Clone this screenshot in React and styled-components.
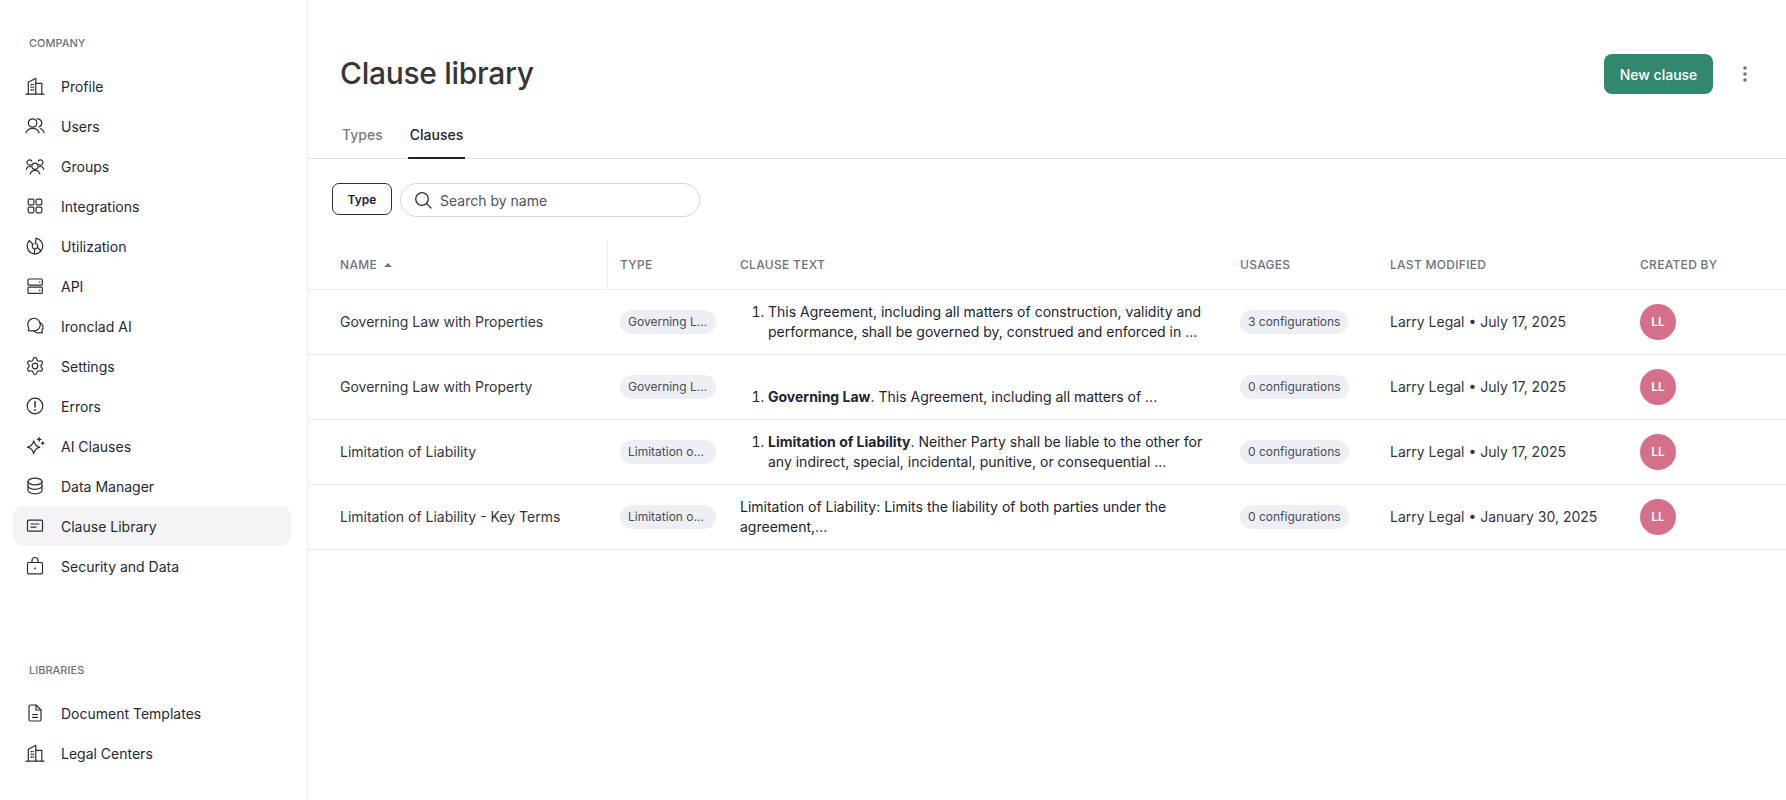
import React from 'react';
import styled, { createGlobalStyle } from 'styled-components';

const Global = createGlobalStyle`
  html, body { margin: 0; padding: 0; background: #fff; }
  body { font-family: Inter, "Liberation Sans", sans-serif; color: #22242f; -webkit-font-smoothing: antialiased; }
  * { box-sizing: border-box; }
`;

const Page = styled.div`
  display: flex;
  height: 800px;
  width: 100%;
  overflow: hidden;
`;

const Sidebar = styled.nav`
  flex: 0 0 308px;
  width: 308px;
  height: 800px;
  padding: 35px 16px 0 13px;
  border-right: 1px solid #ededf0;
`;

const SectionLabel = styled.div`
  font-size: 11px;
  line-height: 16px;
  font-weight: 500;
  color: #6f717c;
  text-transform: uppercase;
  padding-left: 16px;
  margin-bottom: 15px;
`;

const NavGroup = styled.div`
  & + & {
    margin-top: 76px;
  }
`;

const NavRow = styled.div`
  display: flex;
  align-items: center;
  gap: 16px;
  height: 40px;
  padding-left: 12px;
  border-radius: 10px;
  font-size: 14px;
  color: #262833;
  background: ${p => (p.$active ? '#f4f4f7' : 'transparent')};
`;

const IconSvg = styled.svg`
  flex: none;
  width: 20px;
  height: 20px;
  fill: none;
  stroke: #2b2d38;
  stroke-width: 1.2;
  stroke-linecap: round;
  stroke-linejoin: round;
`;

const Dot = styled.circle`
  fill: #2b2d38;
  stroke: none;
`;

const icons = {
  building: (
    <>
      <path d="M1 18.2h18" />
      <path d="M3.3 18.2V6.3L10.8 2.2v16" />
      <path d="M10.8 7.3h6v10.9" />
      <path d="M6 8.6h.9M8.2 8.6h.4M6 11.2h.9M8.2 11.2h.4M6 14h.9M8.2 14h.4" strokeWidth="1.3" />
    </>
  ),
  users: (
    <>
      <circle cx="7.6" cy="7" r="4.2" />
      <path d="M1 16.8c1.1-2.9 3.6-4.4 6.6-4.4s5.500 1.500 6.600 4.400" />
      <path d="M12 3c2.700-.3 4.800 1.500 4.800 4 0 1.800-1.100 3.300-2.700 3.900" />
      <path d="M15.600 12.600c1.800.6 2.900 1.900 3.600 4.200" />
    </>
  ),
  groups: (
    <>
      <circle cx="10" cy="10.2" r="3.1" />
      <path d="M5.2 18c.7-2.2 2.500-3.600 4.800-3.600s4.100 1.400 4.800 3.600" />
      <path d="M6.200 8.600C5.700 9 5.100 9.100 4.600 9.100a2.600 2.600 0 1 1 2.200-4" />
      <path d="M1.200 13.400c.5-1.800 1.800-2.900 3.500-2.900.5 0 1 .1 1.400.3" />
      <path d="M13.200 5.100a2.600 2.600 0 1 1 2.200 4c-.5 0-1.100-.1-1.600-.5" />
      <path d="M13.900 10.800c.4-.2.900-.3 1.400-.3 1.700 0 3 1.100 3.500 2.900" />
    </>
  ),
  grid: (
    <>
      <rect x="3.200" y="3.200" width="5.700" height="5.700" rx="1.200" />
      <rect x="11.100" y="3.200" width="5.700" height="5.700" rx="1.200" />
      <rect x="3.200" y="11.100" width="5.700" height="5.700" rx="1.200" />
      <rect x="11.100" y="11.100" width="5.700" height="5.700" rx="1.200" />
    </>
  ),
  pie: (
    <>
      <path d="M11 2.300A7.800 7.800 0 1 1 4.300 4.700" />
      <path d="M4.300 4.700 8 8.200" />
      <path d="M11 2.300 10.400 7.400" />
      <path d="M10.400 7.400a2.800 2.800 0 1 1-2.400 .8" />
      <path d="M9.800 13 9.300 17.700" />
      <path d="M12.600 11.500 16 15" />
    </>
  ),
  server: (
    <>
      <rect x="3" y="3" width="14.300" height="6.200" rx="1" />
      <rect x="3" y="11.200" width="14.300" height="6.200" rx="1" />
      <path d="M14.600 6.100h.2M14.600 14.300h.2" strokeWidth="1.400" />
    </>
  ),
  chat: (
    <>
      <path d="M3.200 14.600l.8-2.200A6.300 6.300 0 1 1 9 14.900c-1.900.1-3.900 0-5.800-.3z" />
      <path d="M14.800 6.600a5.200 5.200 0 0 1 2 8.200l.5 2-2.200-.3a5.200 5.200 0 0 1-6.100-1.600" />
    </>
  ),
  gear: (
    <>
      <circle cx="10" cy="10" r="2.800" />
      <path
        transform="scale(.8333)"
        strokeWidth="1.440"
        d="M9.671 4.136a2.34 2.34 0 0 1 4.659 0 2.34 2.34 0 0 0 3.319 1.915 2.34 2.34 0 0 1 2.33 4.033 2.34 2.34 0 0 0 0 3.831 2.34 2.34 0 0 1-2.33 4.033 2.34 2.34 0 0 0-3.319 1.915 2.34 2.34 0 0 1-4.659 0 2.34 2.34 0 0 0-3.32-1.915 2.34 2.34 0 0 1-2.33-4.033 2.34 2.34 0 0 0 0-3.831A2.34 2.34 0 0 1 6.35 6.051a2.34 2.34 0 0 0 3.319-1.915"
      />
    </>
  ),
  alert: (
    <>
      <circle cx="10" cy="10" r="7.800" />
      <path d="M10 5.800v5.200" strokeWidth="1.500" />
      <Dot cx="10" cy="14" r=".9" />
    </>
  ),
  sparkle: (
    <>
      <path d="M8.700 4.800c.8 3.700 2.600 5.500 6.100 6.400-3.500.9-5.300 2.700-6.100 6.500-.8-3.800-2.600-5.600-6.300-6.500 3.700-.9 5.500-2.700 6.300-6.400z" />
      <path d="M14.200 1.600v3.600M12.500 3.400h3.500M17.700 6v2.300M16.600 7.200h2.300" strokeWidth="1.300" />
    </>
  ),
  database: (
    <>
      <ellipse cx="10" cy="5.500" rx="7" ry="3.300" />
      <path d="M3 5.500v9c0 1.800 3.100 3.300 7 3.300s7-1.500 7-3.300v-9" />
      <path d="M3 10c0 1.800 3.100 3.300 7 3.300s7-1.500 7-3.300" />
    </>
  ),
  card: (
    <>
      <rect x="2.500" y="4.200" width="15" height="11" rx="1" />
      <path d="M6 8h8M6 11.200h5" />
    </>
  ),
  lock: (
    <>
      <rect x="2.500" y="6.500" width="15" height="11.300" rx="1" />
      <path d="M7 6.500V4.500a3 3 0 0 1 6 0v2" />
      <Dot cx="10" cy="12.400" r=".9" />
    </>
  ),
  doc: (
    <>
      <path d="M4 3.500A1.500 1.500 0 0 1 5.500 2H11l5 5v9.500a1.500 1.500 0 0 1-1.500 1.500h-9A1.500 1.500 0 0 1 4 16.500z" />
      <path d="M11 2v5h5" />
      <path d="M7.500 11.500h5M7.500 14.300h5" />
    </>
  ),
};

const NavIcon = ({ name }) => (
  <IconSvg viewBox="0 0 20 20">{icons[name]}</IconSvg>
);

const companyNav = [
  ['building', 'Profile'],
  ['users', 'Users'],
  ['groups', 'Groups'],
  ['grid', 'Integrations'],
  ['pie', 'Utilization'],
  ['server', 'API'],
  ['chat', 'Ironclad AI'],
  ['gear', 'Settings'],
  ['alert', 'Errors'],
  ['sparkle', 'AI Clauses'],
  ['database', 'Data Manager'],
  ['card', 'Clause Library'],
  ['lock', 'Security and Data'],
];

const libraryNav = [
  ['doc', 'Document Templates'],
  ['building', 'Legal Centers'],
];

const Main = styled.main`
  flex: 1;
  min-width: 0;
`;

const Head = styled.header`
  display: flex;
  align-items: center;
  justify-content: space-between;
  padding: 54px 32px 0;
`;

const Title = styled.h1`
  margin: 0 0 2px;
  font-size: 30px;
  line-height: 38px;
  font-weight: 500;
  color: #363636;
  letter-spacing: -0.3px;
`;

const Actions = styled.div`
  display: flex;
  align-items: center;
  gap: 28px;
  margin-right: 5px;
`;

const PrimaryButton = styled.button`
  width: 109px;
  height: 40px;
  border: 0;
  border-radius: 8px;
  background: #32876f;
  color: #fff;
  font: 500 14px Inter, sans-serif;
`;

const KebabIcon = styled.svg`
  width: 8px;
  height: 16px;
  fill: #6f717c;
`;

const Tabs = styled.div`
  display: flex;
  gap: 23px;
  height: 45px;
  margin-top: 20px;
  padding-left: 32px;
  border-bottom: 1px solid #e2e2e8;
`;

const Tab = styled.div`
  display: flex;
  align-items: center;
  height: 45px;
  padding: 0 2px 2px;
  font-size: 14px;
  font-weight: 500;
  color: ${p => (p.$active ? '#22242f' : '#777a86')};
  border-bottom: 2px solid ${p => (p.$active ? '#22242f' : 'transparent')};
`;

const Filters = styled.div`
  display: flex;
  align-items: flex-start;
  gap: 8px;
  padding: 24px 24px;
`;

const FilterButton = styled.button`
  width: 60px;
  height: 32px;
  border: 1px solid #2b2d38;
  border-radius: 7px;
  background: #fff;
  color: #22242f;
  font: 600 12px Inter, sans-serif;
`;

const SearchBox = styled.div`
  display: flex;
  align-items: center;
  gap: 8px;
  width: 300px;
  height: 34px;
  padding-left: 13px;
  border: 1px solid #d6d6da;
  border-radius: 17px;
  font-size: 14px;
  color: #50525e;
`;

const SearchIcon = styled.svg`
  width: 18px;
  height: 18px;
  fill: none;
  stroke: #2b2d38;
  stroke-width: 1.3;
  stroke-linecap: round;
`;

const columns = '300px 120px 500px 150px 250px 1fr';

const HeaderRow = styled.div`
  display: grid;
  grid-template-columns: ${columns};
  height: 49px;
  border-bottom: 1px solid #ecedf1;
`;

const HeaderCell = styled.div`
  display: flex;
  align-items: center;
  gap: 7px;
  padding-left: ${p => (p.$first ? '32px' : '12px')};
  padding-bottom: 1px;
  border-right: ${p => (p.$first ? '1px solid #ecedf1' : '0')};
  font-size: 12px;
  font-weight: 500;
  color: #6f717c;
  text-transform: uppercase;
  letter-spacing: 0.3px;
`;

const SortIcon = styled.svg`
  width: 8px;
  height: 4px;
  fill: #6f717c;
`;

const Row = styled.div`
  display: grid;
  grid-template-columns: ${columns};
  height: 65px;
  border-bottom: 1px solid #ecedf1;
  align-items: center;
`;

const Cell = styled.div`
  padding-left: ${p => (p.$first ? '32px' : '12px')};
  font-size: 14px;
  line-height: 20px;
  color: #33353d;
`;

const ClauseCell = styled.div`
  padding: 0 12px;
  font-size: 14px;
  line-height: 20px;
  color: #22242f;
  min-height: 40px;
`;

const ClauseList = styled.ol`
  margin: 0;
  padding-left: 28px;
`;

const Chip = styled.span`
  display: inline-block;
  height: 24px;
  width: ${p => (p.$fixed ? '96px' : 'auto')};
  padding: 0 8px;
  border-radius: 12px;
  background: #eeeff4;
  font-size: 12px;
  line-height: 24px;
  color: #4a4c57;
  white-space: nowrap;
  vertical-align: middle;
`;

const Avatar = styled.div`
  display: flex;
  align-items: center;
  justify-content: center;
  width: 36px;
  height: 36px;
  border-radius: 50%;
  background: #d5708b;
  color: #fff;
  font-size: 12px;
  font-weight: 600;
`;

const rows = [
  {
    name: 'Governing Law with Properties',
    type: 'Governing L...',
    clause: (
      <ClauseList>
        <li>This Agreement, including all matters of construction, validity and performance, shall be governed by, construed and enforced in ...</li>
      </ClauseList>
    ),
    usages: '3 configurations',
    modified: 'Larry Legal • July 17, 2025',
  },
  {
    name: 'Governing Law with Property',
    type: 'Governing L...',
    clause: (
      <>
        <br />
        <ClauseList>
          <li><b>Governing Law</b>. This Agreement, including all matters of ...</li>
        </ClauseList>
      </>
    ),
    usages: '0 configurations',
    modified: 'Larry Legal • July 17, 2025',
  },
  {
    name: 'Limitation of Liability',
    type: 'Limitation o...',
    clause: (
      <ClauseList>
        <li><b>Limitation of Liability</b>. Neither Party shall be liable to the other for any indirect, special, incidental, punitive, or consequential ...</li>
      </ClauseList>
    ),
    usages: '0 configurations',
    modified: 'Larry Legal • July 17, 2025',
  },
  {
    name: 'Limitation of Liability - Key Terms',
    type: 'Limitation o...',
    clause: 'Limitation of Liability: Limits the liability of both parties under the agreement,...',
    usages: '0 configurations',
    modified: 'Larry Legal • January 30, 2025',
  },
];

export default function App() {
  return (
    <Page>
      <Global />
      <Sidebar>
        <NavGroup>
          <SectionLabel>Company</SectionLabel>
          {companyNav.map(([icon, label]) => (
            <NavRow key={label} $active={label === 'Clause Library'}>
              <NavIcon name={icon} />
              {label}
            </NavRow>
          ))}
        </NavGroup>
        <NavGroup>
          <SectionLabel>Libraries</SectionLabel>
          {libraryNav.map(([icon, label]) => (
            <NavRow key={label}>
              <NavIcon name={icon} />
              {label}
            </NavRow>
          ))}
        </NavGroup>
      </Sidebar>
      <Main>
        <Head>
          <Title>Clause library</Title>
          <Actions>
            <PrimaryButton>New clause</PrimaryButton>
            <KebabIcon viewBox="0 0 8 16">
              <circle cx="4" cy="2" r="1.8" />
              <circle cx="4" cy="8" r="1.8" />
              <circle cx="4" cy="14" r="1.8" />
            </KebabIcon>
          </Actions>
        </Head>
        <Tabs>
          <Tab>Types</Tab>
          <Tab $active>Clauses</Tab>
        </Tabs>
        <Filters>
          <FilterButton>Type</FilterButton>
          <SearchBox>
            <SearchIcon viewBox="0 0 18 18">
              <circle cx="8" cy="8" r="6.300" />
              <path d="M12.600 12.600 17 17" />
            </SearchIcon>
            Search by name
          </SearchBox>
        </Filters>
        <HeaderRow>
          <HeaderCell $first>
            Name
            <SortIcon viewBox="0 0 8 4"><path d="M4 0 8 4H0z" /></SortIcon>
          </HeaderCell>
          <HeaderCell>Type</HeaderCell>
          <HeaderCell>Clause text</HeaderCell>
          <HeaderCell>Usages</HeaderCell>
          <HeaderCell>Last modified</HeaderCell>
          <HeaderCell>Created by</HeaderCell>
        </HeaderRow>
        {rows.map(r => (
          <Row key={r.name}>
            <Cell $first>{r.name}</Cell>
            <Cell><Chip $fixed>{r.type}</Chip></Cell>
            <ClauseCell>{r.clause}</ClauseCell>
            <Cell><Chip>{r.usages}</Chip></Cell>
            <Cell>{r.modified}</Cell>
            <Cell><Avatar>LL</Avatar></Cell>
          </Row>
        ))}
      </Main>
    </Page>
  );
}
